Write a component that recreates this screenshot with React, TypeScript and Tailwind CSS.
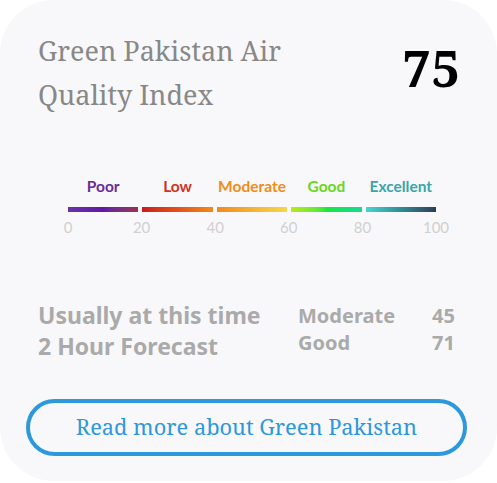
import React from "react";

const bars = [
  { label: "Poor", color: "text-[#6a2a9a]", grad: "bg-gradient-to-r from-[#6a32a8] via-[#5f16a8] to-[#9a2e52]" },
  { label: "Low", color: "text-[#d0341c]", grad: "bg-gradient-to-r from-[#cc1818] via-[#e2501a] to-[#f08a1c]" },
  { label: "Moderate", color: "text-[#ee8c1c]", grad: "bg-gradient-to-r from-[#f08a1c] to-[#f4d84a]" },
  { label: "Good", color: "text-[#6ad61c]", grad: "bg-gradient-to-r from-[#b8e818] via-[#18e83a] to-[#18d890]" },
  { label: "Excellent", color: "text-[#3aa6a8]", grad: "bg-gradient-to-r from-[#48d6d2] via-[#2e8c94] to-[#2c3e58]" },
];

const ticks = ["0", "20", "40", "60", "80", "100"];

export default function App() {
  return (
    <div className="w-[497px] h-[483px] bg-white">
      <div className="w-[497px] h-[481px] rounded-[54px] bg-[#f8f8fa] flex flex-col">
        <div className="flex justify-between pl-[38px] pr-[37px] pt-[29px]">
          <div
            className="text-[27px] leading-[44px] text-[#888888]"
            style={{ fontFamily: '"Noto Serif", "DejaVu Serif", serif' }}
          >
            Green Pakistan Air
            <br />
            Quality Index
          </div>
          <div
            className="text-[51px] font-bold leading-none text-black pt-[13px]"
            style={{ fontFamily: '"Noto Serif", "DejaVu Serif", serif' }}
          >
            75
          </div>
        </div>

        <div className="ml-[68px] w-[368px] mt-[60px]" style={{ fontFamily: "Lato, sans-serif" }}>
          <div className="flex gap-[4px]">
            {bars.map((b) => (
              <div key={b.label} className="flex-1 flex flex-col items-center">
                <div className={`text-[15.5px] font-bold leading-[19px] ${b.color}`}>{b.label}</div>
                <div className={`mt-[11px] h-[5px] w-full ${b.grad}`} />
              </div>
            ))}
          </div>
          <div className="relative h-[24px] mt-[6px]">
            {ticks.map((t, i) => (
              <span
                key={t}
                className="absolute top-0 -translate-x-1/2 text-[15px] leading-[18px] text-[#d0d0d0]"
                style={{ left: `${i * 20}%` }}
              >
                {t}
              </span>
            ))}
          </div>
        </div>

        <div
          className="mt-[58px] pl-[38px] pr-[42px] flex items-start text-[#aaaaaa] font-bold"
          style={{ fontFamily: '"Noto Sans", sans-serif' }}
        >
          <div className="text-[23px] leading-[31px] flex-1">
            <div>Usually at this time</div>
            <div>2 Hour Forecast</div>
          </div>
          <div className="text-[20px] leading-[27px] w-[157px] grid grid-cols-[1fr_auto] pt-[2px]">
            <div>Moderate</div>
            <div className="text-right">45</div>
            <div>Good</div>
            <div className="text-right">71</div>
          </div>
        </div>

        <div className="mt-[37px] ml-[26px] w-[441px] h-[57px] rounded-full border-[4px] border-[#2e98dc] flex items-center justify-center">
          <span
            className="text-[21.8px] text-[#2e98dc]"
            style={{ fontFamily: '"Noto Serif", "DejaVu Serif", serif' }}
          >
            Read more about Green Pakistan
          </span>
        </div>
      </div>
    </div>
  );
}
